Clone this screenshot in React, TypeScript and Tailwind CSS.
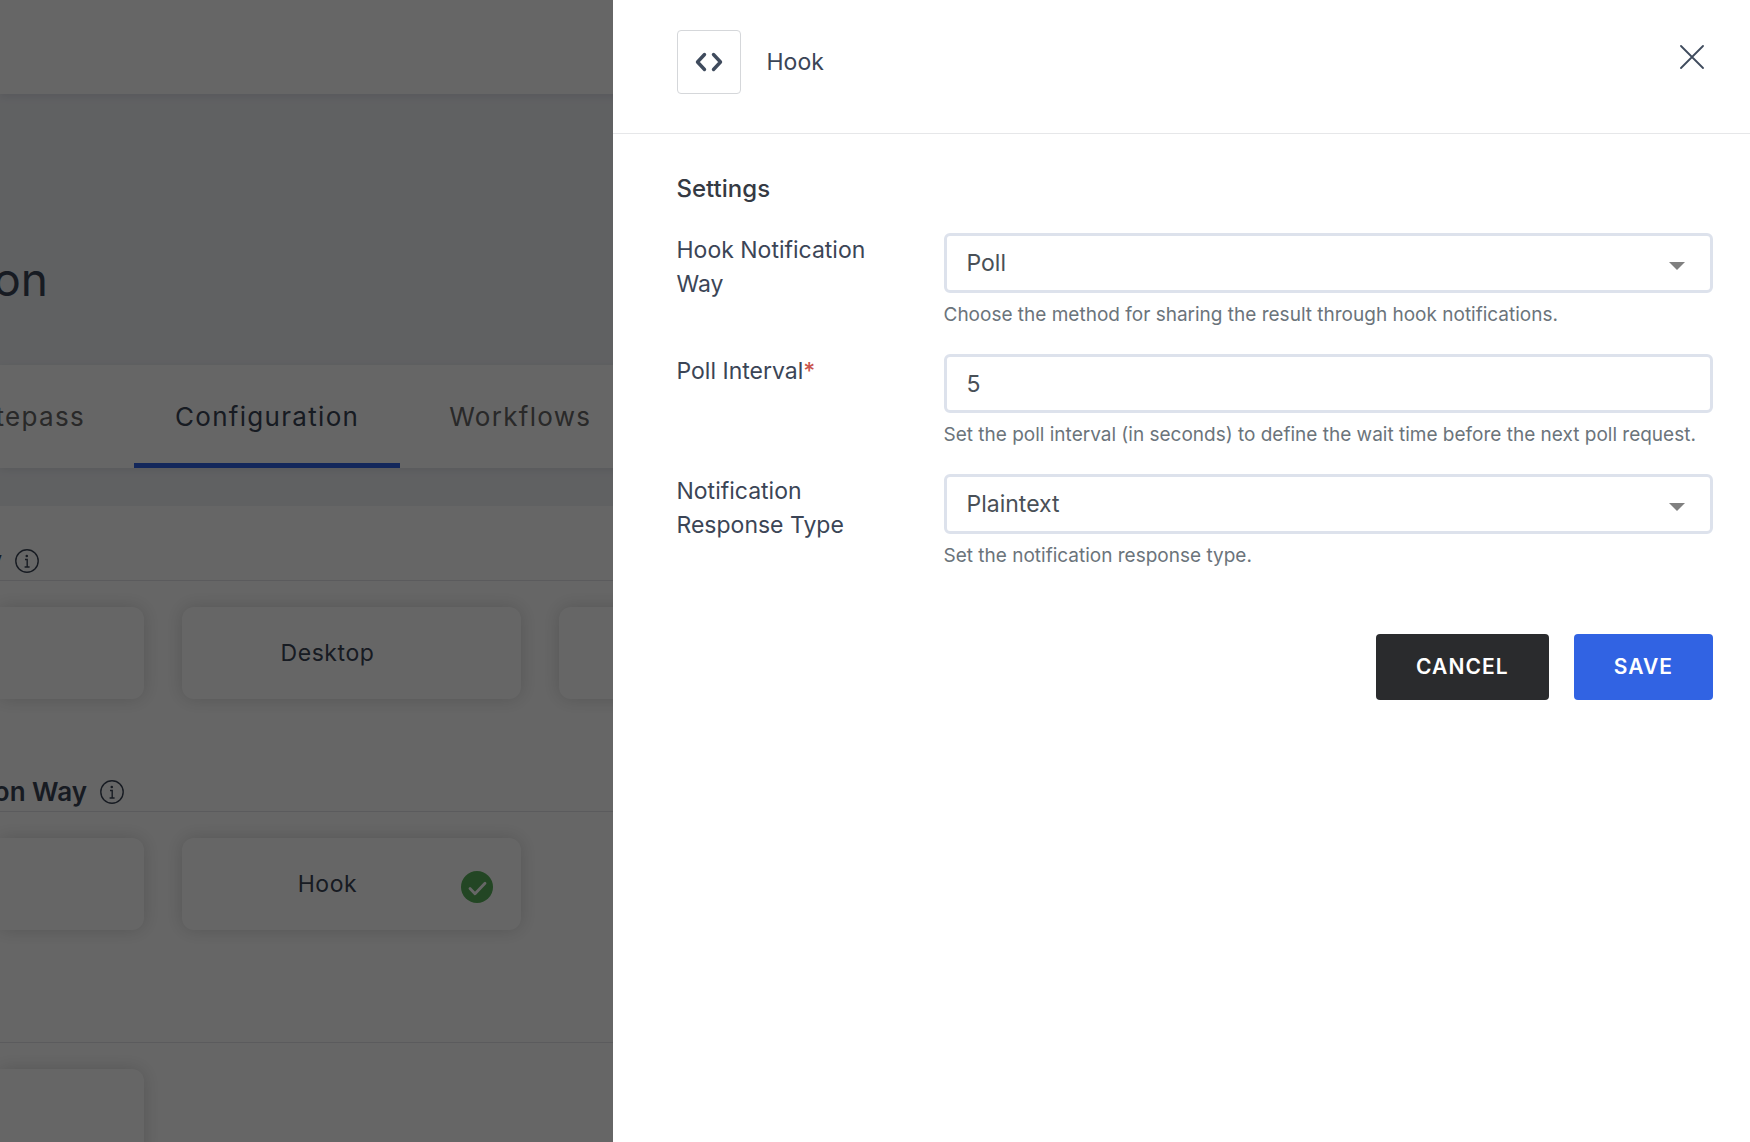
import type { ReactNode } from "react";

// ==========================================
// Data
// ==========================================

const tabs = [
  { label: "tepass", active: false },
  { label: "Configuration", active: true },
  { label: "Workflows", active: false },
];

const notificationWays = ["Poll", "Callback"];
const responseTypes = ["Plaintext", "JSON"];

// ==========================================
// Icons
// ==========================================

function InfoIcon() {
  return (
    <svg width="24" height="24" viewBox="0 0 24 24" fill="none" stroke="#3b4556">
      <circle cx="12" cy="12" r="11.2" strokeWidth="1.4" />
      <circle cx="11.8" cy="7" r="1.3" fill="#3b4556" stroke="none" />
      <path d="M10 10.5h2.2v7.5M9.6 18h5" strokeWidth="1.4" />
    </svg>
  );
}

function CheckIcon() {
  return (
    <svg width="32" height="32" viewBox="0 0 32 32" fill="none">
      <circle cx="16" cy="16" r="16" fill="#58b05a" />
      <path
        d="M9 17.5l5 5.200 10-10.500"
        stroke="#fff"
        strokeWidth="2.8"
        strokeLinecap="round"
        strokeLinejoin="round"
      />
    </svg>
  );
}

function CodeIcon() {
  return (
    <svg width="28" height="20" viewBox="0 0 28 20" fill="none" stroke="#3f4b5d">
      <path
        d="M9.500 2.500L2.500 10l7 7.500M18.500 2.500l7 7.500-7 7.500"
        strokeWidth="3.400"
        strokeLinecap="round"
        strokeLinejoin="round"
      />
    </svg>
  );
}

function CloseIcon() {
  return (
    <svg width="24" height="24" viewBox="0 0 24 24" stroke="#3f4b5d">
      <path d="M1 1l22 22M23 1L1 23" strokeWidth="1.8" strokeLinecap="round" />
    </svg>
  );
}

// ==========================================
// Page parts
// ==========================================

function Section({
  title,
  width,
  children,
}: {
  title?: string;
  width?: string;
  children: ReactNode;
}) {
  return (
    <section className="pb-[38px]">
      <div className="mb-[26px] flex h-[75px] items-end border-b border-[#e3e4e8] pb-[3px]">
        {title && (
          <div className={`flex items-center justify-end gap-[13px] ${width}`}>
            <h2 className="shrink-0 whitespace-nowrap text-[26px] font-semibold leading-8">
              {title}
            </h2>
            <span className="shrink-0">
              <InfoIcon />
            </span>
          </div>
        )}
      </div>
      <div className="flex gap-[38px]">{children}</div>
    </section>
  );
}

function Card({ label, checked }: { label: string; checked?: boolean }) {
  return (
    <div className="flex h-[92px] w-[339px] items-center rounded-xl bg-white pl-3 pr-7 shadow-[0_0_18px_rgba(0,0,0,0.16)]">
      <span className="flex-1 text-center text-[23px] tracking-wide">
        {label}
      </span>
      <span className="w-8 pt-1.5">{checked && <CheckIcon />}</span>
    </div>
  );
}

function EdgeCard() {
  return (
    <div className="h-[92px] w-36 rounded-r-xl bg-white shadow-[0_0_18px_rgba(0,0,0,0.16)]" />
  );
}

// ==========================================
// Drawer form parts
// ==========================================

function Field({
  id,
  label,
  required,
  help,
  children,
}: {
  id: string;
  label: string;
  required?: boolean;
  help: string;
  children: ReactNode;
}) {
  return (
    <div className="flex gap-12">
      <label
        htmlFor={id}
        className="w-[219px] shrink-0 text-[23px] leading-[34px]"
      >
        {label}
        {required && <span className="font-medium text-[#c9544d]">*</span>}
      </label>
      <div className="flex-1">
        {children}
        <p className="mt-2 text-[19px] leading-7 text-[#6b747b]">{help}</p>
      </div>
    </div>
  );
}

function Select({ id, options }: { id: string; options: string[] }) {
  return (
    <div className="relative">
      <select
        id={id}
        className="block h-[60px] w-full appearance-none rounded-md border-3 border-[#dde2ec] bg-white px-5 text-[23px] text-[#495057]"
      >
        {options.map((option) => (
          <option key={option}>{option}</option>
        ))}
      </select>
      <svg
        width="16"
        height="8"
        viewBox="0 0 16 8"
        className="pointer-events-none absolute right-7 top-7 mt-px"
      >
        <path d="M0 0h16L8 8z" fill="#808080" />
      </svg>
    </div>
  );
}

export default function App() {
  return (
    <div className="h-screen overflow-hidden bg-[#f0f2f6] font-['Inter',sans-serif] text-[#3b4556]">
      {/* Top bar */}
      <header className="h-[94px] bg-white shadow-[0_2px_8px_rgba(60,50,90,0.12)]" />

      {/* Page title */}
      <div className="flex h-[271px] items-end pb-[58px]">
        <div className="flex w-12 justify-end">
          <h1 className="text-[46px] leading-[56px]">on</h1>
        </div>
      </div>

      {/* Tabs */}
      <nav className="flex h-[103px] gap-2 bg-white shadow-[0_2px_8px_rgba(0,0,0,0.08)]">
        {tabs.map((tab) => (
          <a
            key={tab.label}
            href="#"
            className={
              tab.active
                ? "flex items-center border-b-5 border-[#3163e3] px-[41px] pt-1 text-[26px] tracking-wider"
                : "flex items-center justify-end px-[41px] pb-px text-[26px] tracking-wider text-[#666] first:w-[126px]"
            }
          >
            {tab.label}
          </a>
        ))}
      </nav>

      {/* Options */}
      <main className="mt-[38px] bg-white">
        <Section title="y" width="w-[39px]">
          <EdgeCard />
          <Card label="Desktop" />
          <Card label="" />
        </Section>
        <Section title="on Way" width="w-[124px]">
          <EdgeCard />
          <Card label="Hook" checked />
        </Section>
        <Section>
          <EdgeCard />
        </Section>
      </main>

      {/* Backdrop */}
      <div className="fixed inset-0 bg-black/60" />

      {/* Drawer */}
      <aside className="fixed inset-y-0 right-0 w-[65%] overflow-y-auto bg-white">
        <div className="flex items-start justify-between border-b border-[#e6e7e9] pb-[39px] pl-16 pr-[46px] pt-[30px]">
          <div className="flex items-center gap-[26px]">
            <div className="flex size-16 items-center justify-center rounded-sm border border-[#d5d7da]">
              <CodeIcon />
            </div>
            <h2 className="text-[23px]">Hook</h2>
          </div>
          <button type="button" aria-label="Close" className="pt-[15px]">
            <CloseIcon />
          </button>
        </div>

        <form className="pl-16 pr-[37px] pt-[39px]">
          <h3 className="mb-7 text-2xl font-medium text-[#353a43]">
            Settings
          </h3>

          <div className="flex flex-col gap-[25px]">
            <Field
              id="notification-way"
              label="Hook Notification Way"
              help="Choose the method for sharing the result through hook notifications."
            >
              <Select id="notification-way" options={notificationWays} />
            </Field>

            <Field
              id="poll-interval"
              label="Poll Interval"
              required
              help="Set the poll interval (in seconds) to define the wait time before the next poll request."
            >
              <input
                id="poll-interval"
                type="text"
                defaultValue="5"
                className="block h-[59px] w-full rounded-md border-3 border-[#dde2ec] bg-white px-5 text-[23px] text-[#495057]"
              />
            </Field>

            <Field
              id="response-type"
              label="Notification Response Type"
              help="Set the notification response type."
            >
              <Select id="response-type" options={responseTypes} />
            </Field>
          </div>

          <div className="mt-16 flex justify-end gap-[25px]">
            <button
              type="button"
              className="h-[66px] rounded bg-[#2a2b2d] px-10 text-[21px] font-semibold tracking-wider text-white"
            >
              CANCEL
            </button>
            <button
              type="submit"
              className="h-[66px] rounded bg-[#3163e3] px-10 text-[21px] font-semibold tracking-wider text-white"
            >
              SAVE
            </button>
          </div>
        </form>
      </aside>
    </div>
  );
}
